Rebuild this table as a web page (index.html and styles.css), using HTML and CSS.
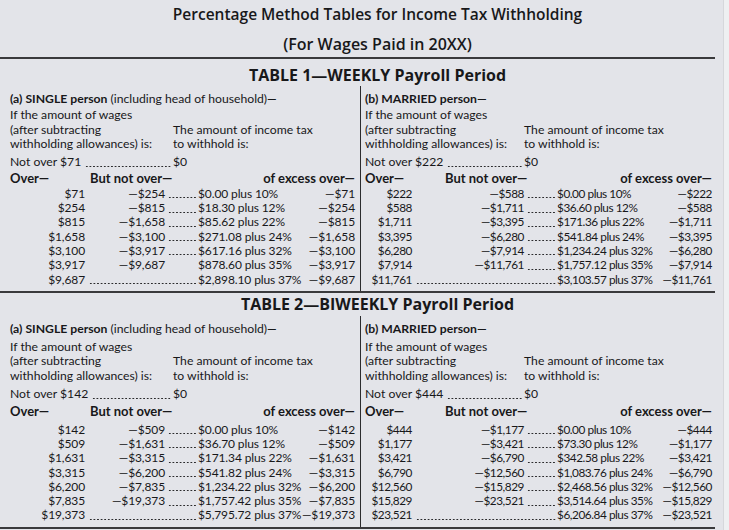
FILE: index.html
```html
<!DOCTYPE html>
<html>
<head>
<meta charset="utf-8">
<link rel="stylesheet" href="styles.css">
</head>
<body>
<div class="page">
  <header class="doc-head">
    <h1 class="title">Percentage Method Tables for Income Tax Withholding</h1>
    <h2 class="subtitle">(For Wages Paid in 20XX)</h2>
  </header>

  <section class="tbl tbl-1">
    <h3 class="tbl-title">TABLE 1—WEEKLY Payroll Period</h3>
    <div class="halves">
      <div class="half half-left">
        <p class="who"><b>(a) SINGLE person</b> (including head of household)—</p>
        <div class="intro">
          <div>If the amount of wages<br>(after subtracting<br>withholding allowances) is:</div>
          <div class="intro-r">The amount of income tax<br>to withhold is:</div>
        </div>
        <div class="notover"><span class="no-lead"><span>Not over $71</span><span class="fill"></span></span><span>$0</span></div>
        <div class="colhead"><span class="ch-over">Over—</span><span class="ch-but">But not over—</span><span class="ch-ex">of excess over—</span></div>
        <div class="rows">
          <span class="r">$71</span><span class="r">—$254</span><span class="lead"></span><span>$0.00 plus 10%</span><span class="r">—$71</span>
          <span class="r">$254</span><span class="r">—$815</span><span class="lead"></span><span>$18.30 plus 12%</span><span class="r">—$254</span>
          <span class="r">$815</span><span class="r">—$1,658</span><span class="lead"></span><span>$85.62 plus 22%</span><span class="r">—$815</span>
          <span class="r">$1,658</span><span class="r">—$3,100</span><span class="lead"></span><span>$271.08 plus 24%</span><span class="r">—$1,658</span>
          <span class="r">$3,100</span><span class="r">—$3,917</span><span class="lead"></span><span>$617.16 plus 32%</span><span class="r">—$3,100</span>
          <span class="r">$3,917</span><span class="r">—$9,687</span><span class="nolead"></span><span>$878.60 plus 35%</span><span class="r">—$3,917</span>
          <span class="r">$9,687</span><span class="longlead"></span><span>$2,898.10 plus 37%</span><span class="r">—$9,687</span>
        </div>
      </div>
      <div class="half half-right">
        <p class="who"><b>(b) MARRIED person—</b></p>
        <div class="intro">
          <div>If the amount of wages<br>(after subtracting<br>withholding allowances) is:</div>
          <div class="intro-r">The amount of income tax<br>to withhold is:</div>
        </div>
        <div class="notover"><span class="no-lead"><span>Not over $222</span><span class="fill"></span></span><span>$0</span></div>
        <div class="colhead"><span class="ch-over">Over—</span><span class="ch-but">But not over—</span><span class="ch-ex">of excess over—</span></div>
        <div class="rows">
          <span class="r">$222</span><span class="r">—$588</span><span class="lead"></span><span>$0.00 plus 10%</span><span class="r">—$222</span>
          <span class="r">$588</span><span class="r">—$1,711</span><span class="lead"></span><span>$36.60 plus 12%</span><span class="r">—$588</span>
          <span class="r">$1,711</span><span class="r">—$3,395</span><span class="lead"></span><span>$171.36 plus 22%</span><span class="r">—$1,711</span>
          <span class="r">$3,395</span><span class="r">—$6,280</span><span class="lead"></span><span>$541.84 plus 24%</span><span class="r">—$3,395</span>
          <span class="r">$6,280</span><span class="r">—$7,914</span><span class="lead"></span><span>$1,234.24 plus 32%</span><span class="r">—$6,280</span>
          <span class="r">$7,914</span><span class="r">—$11,761</span><span class="lead"></span><span>$1,757.12 plus 35%</span><span class="r">—$7,914</span>
          <span class="r">$11,761</span><span class="longlead"></span><span>$3,103.57 plus 37%</span><span class="r">—$11,761</span>
        </div>
      </div>
    </div>
  </section>

  <section class="tbl tbl-2">
    <h3 class="tbl-title">TABLE 2—BIWEEKLY Payroll Period</h3>
    <div class="halves">
      <div class="half half-left">
        <p class="who"><b>(a) SINGLE person</b> (including head of household)—</p>
        <div class="intro">
          <div>If the amount of wages<br>(after subtracting<br>withholding allowances) is:</div>
          <div class="intro-r">The amount of income tax<br>to withhold is:</div>
        </div>
        <div class="notover"><span class="no-lead"><span>Not over $142</span><span class="fill"></span></span><span>$0</span></div>
        <div class="colhead"><span class="ch-over">Over—</span><span class="ch-but">But not over—</span><span class="ch-ex">of excess over—</span></div>
        <div class="rows">
          <span class="r">$142</span><span class="r">—$509</span><span class="lead"></span><span>$0.00 plus 10%</span><span class="r">—$142</span>
          <span class="r">$509</span><span class="r">—$1,631</span><span class="lead"></span><span>$36.70 plus 12%</span><span class="r">—$509</span>
          <span class="r">$1,631</span><span class="r">—$3,315</span><span class="lead"></span><span>$171.34 plus 22%</span><span class="r">—$1,631</span>
          <span class="r">$3,315</span><span class="r">—$6,200</span><span class="lead"></span><span>$541.82 plus 24%</span><span class="r">—$3,315</span>
          <span class="r">$6,200</span><span class="r">—$7,835</span><span class="lead"></span><span>$1,234.22 plus 32%</span><span class="r">—$6,200</span>
          <span class="r">$7,835</span><span class="r">—$19,373</span><span class="lead"></span><span>$1,757.42 plus 35%</span><span class="r">—$7,835</span>
          <span class="r">$19,373</span><span class="longlead"></span><span>$5,795.72 plus 37%</span><span class="r">—$19,373</span>
        </div>
      </div>
      <div class="half half-right">
        <p class="who"><b>(b) MARRIED person—</b></p>
        <div class="intro">
          <div>If the amount of wages<br>(after subtracting<br>withholding allowances) is:</div>
          <div class="intro-r">The amount of income tax<br>to withhold is:</div>
        </div>
        <div class="notover"><span class="no-lead"><span>Not over $444</span><span class="fill"></span></span><span>$0</span></div>
        <div class="colhead"><span class="ch-over">Over—</span><span class="ch-but">But not over—</span><span class="ch-ex">of excess over—</span></div>
        <div class="rows">
          <span class="r">$444</span><span class="r">—$1,177</span><span class="lead"></span><span>$0.00 plus 10%</span><span class="r">—$444</span>
          <span class="r">$1,177</span><span class="r">—$3,421</span><span class="lead"></span><span>$73.30 plus 12%</span><span class="r">—$1,177</span>
          <span class="r">$3,421</span><span class="r">—$6,790</span><span class="lead"></span><span>$342.58 plus 22%</span><span class="r">—$3,421</span>
          <span class="r">$6,790</span><span class="r">—$12,560</span><span class="lead"></span><span>$1,083.76 plus 24%</span><span class="r">—$6,790</span>
          <span class="r">$12,560</span><span class="r">—$15,829</span><span class="lead"></span><span>$2,468.56 plus 32%</span><span class="r">—$12,560</span>
          <span class="r">$15,829</span><span class="r">—$23,521</span><span class="lead"></span><span>$3,514.64 plus 35%</span><span class="r">—$15,829</span>
          <span class="r">$23,521</span><span class="longlead"></span><span>$6,206.84 plus 37%</span><span class="r">—$23,521</span>
        </div>
      </div>
    </div>
  </section>
</div>
</body>
</html>
```

FILE: styles.css
```css
html, body {
  margin: 0;
  padding: 0;
}
body {
  background: #eeeff1;
  font-family: Lato, "Open Sans", sans-serif;
  color: #18181a;
  font-size: 12px;
}
.page {
  width: 723px;
  height: 530px;
  background: #e3e4e9;
  border-right: 1px solid #d6d7db;
  overflow: hidden;
}
.doc-head {
  padding: 3px 0 2px 40px;
  width: 675px;
  border-bottom: 2px solid #3a3a3c;
  text-align: center;
  font-family: "Open Sans", Lato, sans-serif;
}
.title {
  margin: 0;
  font-size: 15.5px;
  font-weight: 600;
  line-height: 22px;
}
.subtitle {
  margin: 8px 0 0;
  font-size: 16px;
  font-weight: 600;
  line-height: 22px;
}
.tbl {
  width: 715px;
  border-bottom: 2px solid #3a3a3c;
}
.tbl-title {
  margin: 0;
  padding: 6px 0 0 40px;
  text-align: center;
  font-family: "Open Sans", Lato, sans-serif;
  font-size: 16px;
  font-weight: 700;
  line-height: 20px;
}
.halves {
  display: grid;
  grid-template-columns: 361px 1fr;
  margin-top: 1px;
}
.half {
  line-height: 14.3px;
  white-space: nowrap;
}
.half-left {
  border-right: 1px solid #2c2c2e;
  padding: 6px 5px 4px 10px;
  --c1: 75px;
  --c2: 80px;
  --c3: 33px;
  --intro: 163px;
}
.half-right {
  padding: 6px 3px 4px 4px;
  --c1: 47px;
  --c2: 112px;
  --c3: 33px;
  --intro: 159px;
}
.who {
  margin: 0;
  font-size: 12.2px;
}
.who b {
  font-weight: 700;
}
.intro {
  display: grid;
  grid-template-columns: var(--intro) 1fr;
  align-items: end;
  margin-top: 2px;
  font-size: 12.2px;
}
.notover {
  display: flex;
  margin-top: 4px;
  font-size: 12.2px;
}
.no-lead {
  display: flex;
  width: var(--intro);
}
.fill,
.lead,
.longlead {
  background-image: radial-gradient(circle, #2a2a2c 0.75px, transparent 1.05px);
  background-size: 3.6px 3px;
  background-repeat: repeat-x;
  background-position: 0 9.5px;
}
.fill {
  flex: 1;
  margin: 0 1px 0 4px;
}
.lead {
  margin: 0 1px 0 3px;
}
.longlead {
  grid-column: 2 / 4;
  margin: 0 1px 0 4px;
}
.colhead {
  display: flex;
  font-size: 13px;
  font-weight: 700;
  margin-top: 2px;
}
.ch-over {
  width: 80px;
}
.ch-ex {
  margin-left: auto;
}
.rows {
  display: grid;
  grid-template-columns: var(--c1) var(--c2) var(--c3) 1fr auto;
  margin-top: 1px;
  font-size: 12px;
}
.half-left .rows {
  letter-spacing: -0.12px;
}
.half-right .rows {
  font-size: 11.8px;
  letter-spacing: -0.45px;
}
.r {
  text-align: right;
}
.tbl-2 .tbl-title {
  padding-top: 1px;
}
.tbl-2 .halves {
  margin-top: 2px;
}
.tbl-2 .half {
  padding-top: 6px;
}
.tbl-2 .intro {
  margin-top: 4px;
}
.tbl-2 .notover {
  margin-top: 4px;
}
.tbl-2 .colhead {
  margin-top: 3px;
}
.tbl-2 .rows {
  margin-top: 4px;
}
```
